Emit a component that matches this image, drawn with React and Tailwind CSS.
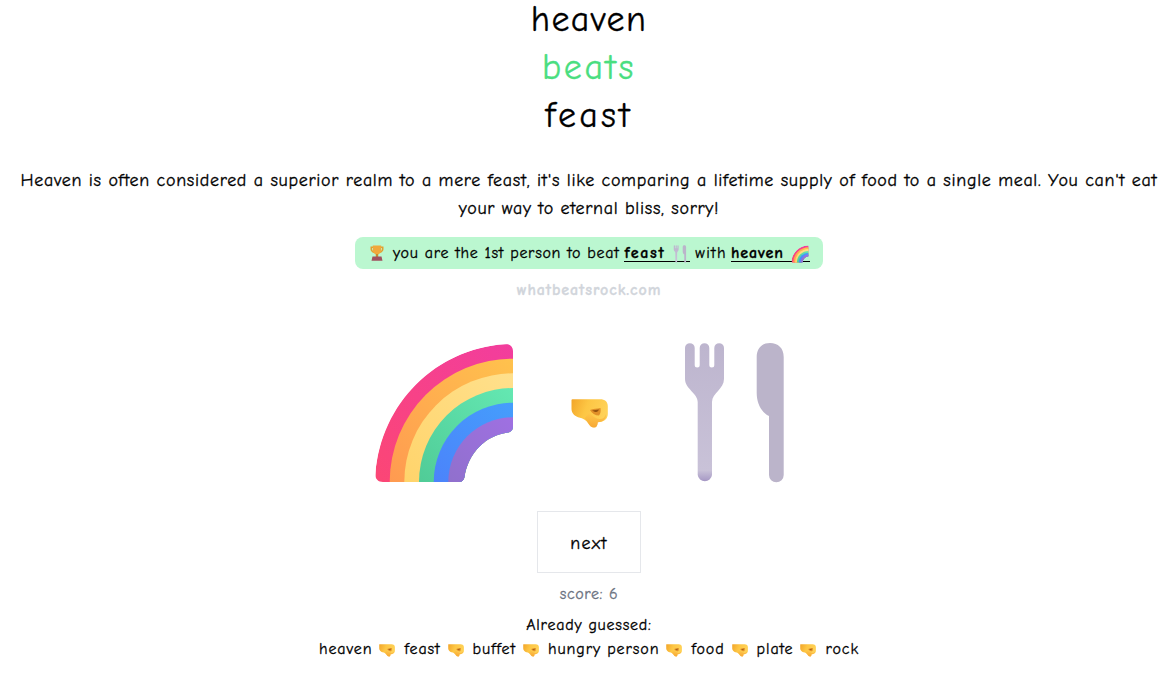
const GUESSES = ['heaven', 'feast', 'buffet', 'hungry person', 'food', 'plate', 'rock']

function Fist({ className, id }) {
  return (
    <svg viewBox="0 0 37 29" className={className}>
      <defs>
        <linearGradient id={id} x1="0" y1="0" x2="1" y2="0.3">
          <stop offset="0" stopColor="#f2a52a" />
          <stop offset="0.45" stopColor="#fdc644" />
          <stop offset="1" stopColor="#ffd258" />
        </linearGradient>
        <linearGradient id={`${id}-low`} x1="0" y1="0" x2="0" y2="1">
          <stop offset="0" stopColor="#ffcb4c" />
          <stop offset="1" stopColor="#f59a2c" />
        </linearGradient>
      </defs>
      <path
        d="M0.5 1 C0.5 0.5 1 0.3 2 0.3 H29 C34 0.3 36.8 3 36.8 7 V15 C36.8 19 34 22.5 29 23 L26.5 23.2 C26.5 26.5 25.5 28.6 23 28.6 C20.5 28.6 19 27 17 24 C15 21 12 19.5 8 18.5 C4 17.5 0.5 14 0.5 10 Z"
        fill={`url(#${id})`}
      />
      <path d="M18 13 C21 17 25 20 29 20 C32 20 34 18 35 15 V18 C34 21 31 23 27 23.2 C26.5 26.5 25.5 28.6 23 28.6 C20.5 28.6 19 27 17 24 C16 22 15 20.5 13.5 19.5 Z" fill={`url(#${id}-low)`} opacity="0.75" />
      <path d="M19 11 C22 10 26 9.5 29.5 9 C30 12 29.5 15 28 16.5 C24 16.5 21 14.5 19 11 Z" fill="#e08f28" />
      <path d="M21 11.4 L28 10.4 C27.5 12 26 13 24 13 Z" fill="#94520f" />
    </svg>
  )
}

function Rainbow({ className, id }) {
  const bands = [
    [138, 'a', '#ff4a64', '#f23d9e'],
    [123.3, 'b', '#ff8a52', '#ffc24d'],
    [108.7, 'c', '#ffcf5e', '#ffe08c'],
    [94, 'd', '#48c08c', '#64e8b2'],
    [79.3, 'e', '#4e78fa', '#459efc'],
    [64.7, 'f', '#8a70c4', '#9f70e2'],
  ]
  return (
    <svg viewBox="0 0 160 160" className={className}>
      <defs>
        <clipPath id={`${id}-clip`}>
          <path d="M19 149 C14 149 11 146 11.5 141 C17 70 72 16 141 11 C146 10.6 149 14 149 18 V93 C149 97 147 99 144 99.5 C122 102 104 120 100.5 144 C100 147 98 149 95 149 Z" />
        </clipPath>
        {bands.map(([, key, bottom, top]) => (
          <linearGradient key={key} id={`${id}-${key}`} x1="0" y1="1" x2="1" y2="0">
            <stop offset="0.05" stopColor={bottom} />
            <stop offset="0.75" stopColor={top} />
          </linearGradient>
        ))}
      </defs>
      <g clipPath={`url(#${id}-clip)`}>
        {bands.map(([r, key]) => (
          <circle key={key} cx="149" cy="149" r={r} fill={`url(#${id}-${key})`} />
        ))}
      </g>
    </svg>
  )
}

function Cutlery({ className, id }) {
  return (
    <svg viewBox="0 0 160 160" className={className}>
      <defs>
        <linearGradient id={`${id}-fork`} x1="0" y1="0" x2="0" y2="1">
          <stop offset="0" stopColor="#bdb5ce" />
          <stop offset="0.92" stopColor="#c9c2d8" />
          <stop offset="1" stopColor="#a597c4" />
        </linearGradient>
      </defs>
      <path
        d="M30 15 A4.85 4.85 0 0 1 39.7 15 V32 A2.5 2.5 0 0 0 44.7 32 V15 A4.8 4.8 0 0 1 54.3 15 V32 A2.5 2.5 0 0 0 59.3 32 V15 A4.85 4.85 0 0 1 69 15 V46 C69 56 57 60 57 69 V142 A7.2 7.2 0 0 1 42.7 142 V69 C42.7 60 30 56 30 46 Z"
        fill={`url(#${id}-fork)`}
      />
      <path
        d="M115 10 C123 10 128.7 15 128.7 24 V142 A7.3 7.3 0 0 1 114 142 V83 C106 79 101.7 70 101.7 60 V24 C101.7 15 107 10 115 10 Z"
        fill="#bbb4ca"
      />
    </svg>
  )
}

function Trophy() {
  return (
    <svg viewBox="0 0 14 16" className="h-4 w-[14px] shrink-0">
      <path d="M0.5 1.5 H13.5 V4 C13.5 6.5 11 8 9.5 8 H4.5 C3 8 0.5 6.5 0.5 4 Z M2 3 V4 C2 5 3 6.2 4 6.4 L3.6 3 Z M12 3 V4 C12 5 11 6.2 10 6.4 L10.4 3 Z" fillRule="evenodd" fill="#e0a030" />
      <path d="M2.8 0.5 H11.2 V5 C11.2 7.8 9.2 9.6 7 9.6 C4.8 9.6 2.8 7.8 2.8 5 Z" fill="#f0a83c" />
      <rect x="5.8" y="9" width="2.4" height="3" fill="#c98a2c" />
      <path d="M2.5 11.5 H11.5 L12.5 15.8 H1.5 Z" fill="#a0505f" />
    </svg>
  )
}

function Badge() {
  return (
    <div className="flex h-8 w-[468px] items-center whitespace-nowrap rounded-lg bg-[#bbf7d0] pl-[15px] text-base text-black">
      <Trophy />
      <span className="ml-[9px] tracking-[0.7px]">you are the 1st person to beat</span>
      <span className="ml-[5px] inline-flex h-[17px] items-start border-b border-black font-bold leading-4 tracking-[1.6px]">
        feast
        <Cutlery className="-mt-px ml-[5px] h-[20px] w-[20px]" id="small-cutlery" />
      </span>
      <span className="ml-[5px] tracking-[1.3px]">with</span>
      <span className="ml-[4px] inline-flex h-[17px] items-start border-b border-black font-bold leading-4 tracking-[0.9px]">
        heaven
        <Rainbow className="-mt-px ml-[6px] h-[20px] w-[20px]" id="small-rainbow" />
      </span>
    </div>
  )
}

export default function App() {
  return (
    <div className="flex min-h-[678px] flex-col items-center bg-white pl-3 font-['Comic_Sans_MS','Comic_Neue','Open_Sans',sans-serif] text-black [-webkit-text-stroke-width:0.3px]">
      <div className="-mt-1 flex flex-col items-center text-4xl leading-[48px]">
        <div className="tracking-[1.4px]">heaven</div>
        <div className="tracking-[2.6px] text-[#4ade80]">beats</div>
        <div className="tracking-[3.2px]">feast</div>
      </div>
      <p className="mt-[27px] w-full px-1 text-center text-lg leading-7 tracking-[0.68px]">
        Heaven is often considered a superior realm to a mere feast, it's like comparing a lifetime supply of food to a single meal. You can't eat your way to eternal bliss, sorry!
      </p>
      <div className="mt-[14px]">
        <Badge />
      </div>
      <div className="mt-[9px] text-base font-bold leading-6 tracking-[0.9px] text-[#d1d5db]">whatbeatsrock.com</div>
      <div className="mt-[31px] flex items-center">
        <Rainbow className="h-40 w-40" id="big-rainbow" />
        <Fist className="mx-[47px] h-[29px] w-[37px]" id="big-fist" />
        <Cutlery className="h-40 w-40" id="big-cutlery" />
      </div>
      <button className="mt-[18px] h-[62px] w-[104px] border border-[#e5e7eb] pt-[3px] text-lg tracking-[1.2px]">next</button>
      <div className="mt-[9px] text-base leading-6 tracking-[0.6px] text-[#6b7280]">score: 6</div>
      <div className="mt-[7px] text-base leading-6 tracking-[0.75px]">Already guessed:</div>
      <div className="flex items-center text-base leading-6 tracking-[0.9px]">
        {GUESSES.map((guess, i) => (
          <span key={guess} className="flex items-center">
            {i > 0 && <Fist className="ml-[7px] mr-[9px] mt-[2px] h-[13px] w-[16px]" id={`fist-${i}`} />}
            {guess}
          </span>
        ))}
      </div>
    </div>
  )
}
